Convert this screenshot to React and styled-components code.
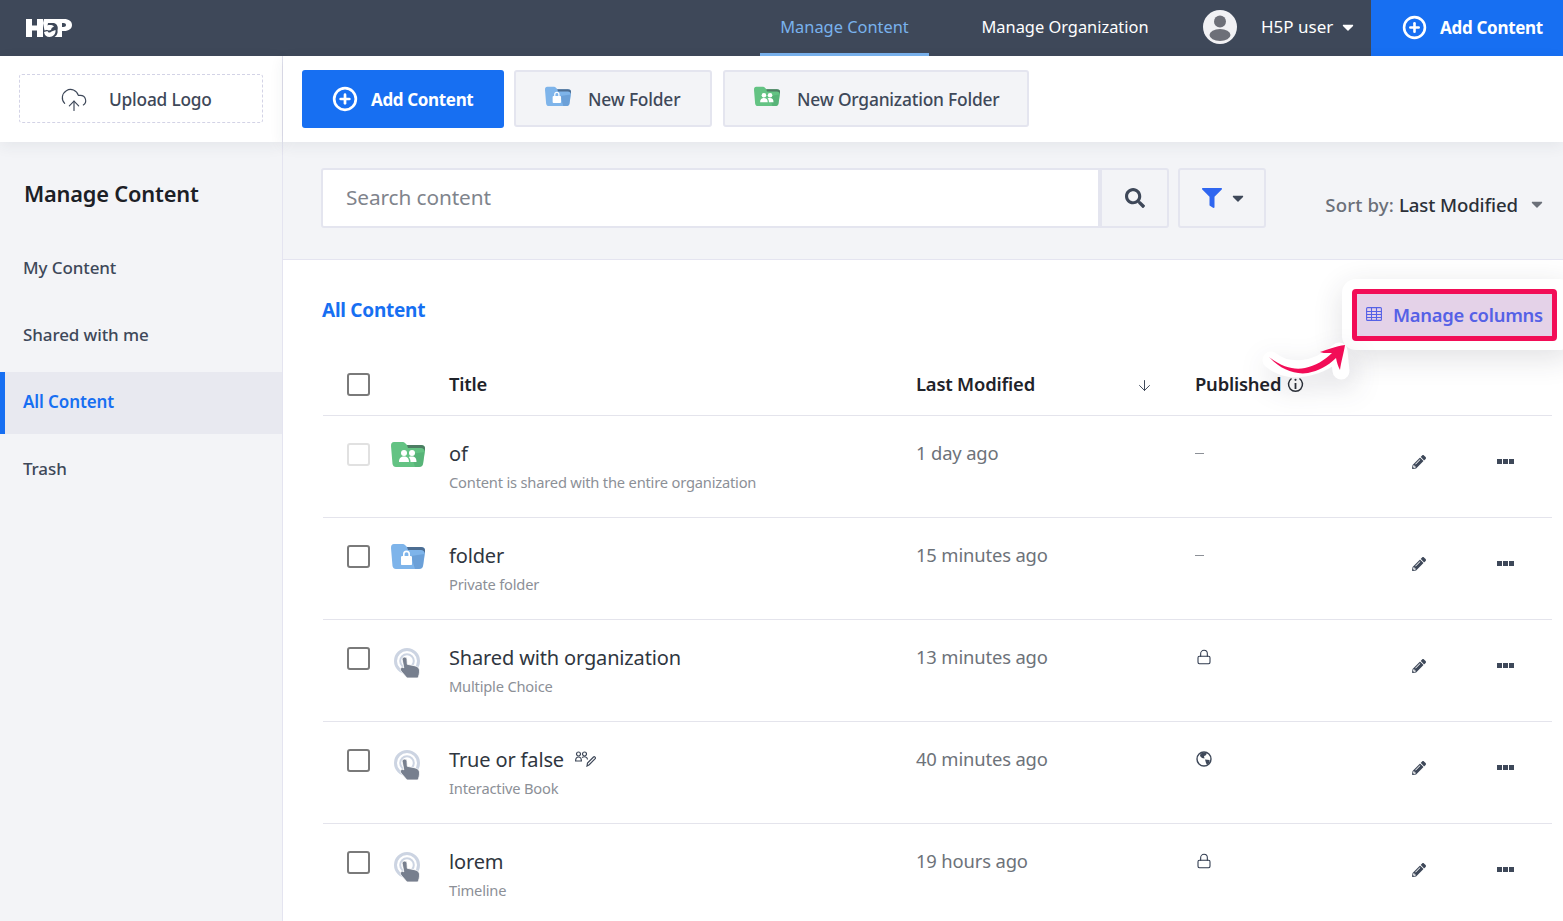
import React from 'react';
import styled, { createGlobalStyle } from 'styled-components';
import { CloudUpload, CirclePlus, Lock, ArrowDown } from 'lucide-react';
import { FaSearch, FaFilter, FaPencilAlt, FaCaretDown } from 'react-icons/fa';

const Global = createGlobalStyle`
  * { box-sizing: border-box; }
  html, body { margin: 0; height: 100%; }
  body {
    font-family: "Noto Sans", "Open Sans", sans-serif;
    color: #3e4859;
    overflow: hidden;
    background: #fff;
  }
`;

const Page = styled.div`
  position: relative;
  width: 1563px;
  height: 921px;
  overflow: hidden;
  display: flex;
  flex-direction: column;
`;

const NavBar = styled.header`
  height: 56px;
  flex: none;
  background: #3e4859;
  display: flex;
  align-items: center;
  padding-left: 26px;
  color: #fff;
`;
const Logo = styled.div`
  flex: 1;
  display: flex;
  align-items: center;
`;
const NavLink = styled.div`
  height: 56px;
  display: flex;
  align-items: center;
  justify-content: center;
  width: ${p => p.$width}px;
  margin-right: ${p => p.$gap || 0}px;
  font-size: 16.4px;
  color: ${p => (p.$active ? '#79b2ed' : '#fff')};
  border-bottom: 3px solid ${p => (p.$active ? '#79b2ed' : 'transparent')};
`;
const UserMenu = styled.div`
  display: flex;
  align-items: center;
  width: 168px;
  font-size: 17px;
  margin-bottom: 2px;
`;
const UserName = styled.span`
  margin: 0 6px 2px 24px;
`;
const NavAdd = styled.div`
  width: 192px;
  height: 56px;
  background: #176ff2;
  display: flex;
  align-items: center;
  gap: 13px;
  padding: 0 0 2px 31px;
  font-size: 17px;
  font-weight: 700;
  letter-spacing: -0.3px;
`;

const Body = styled.div`
  flex: 1;
  display: flex;
  min-height: 0;
`;

const SideBar = styled.aside`
  width: 283px;
  flex: none;
  background: #f3f4f7;
  border-right: 1px solid #e4e4f0;
  display: flex;
  flex-direction: column;
`;
const LogoBox = styled.div`
  position: relative;
  height: 86px;
  flex: none;
  background: #fff;
  padding: 18px 19px 19px;
  box-shadow: 0 4px 14px rgba(40, 50, 70, 0.07);
`;
const UploadLogo = styled.div`
  height: 49px;
  width: 244px;
  border: 1px dashed #d3d3e6;
  border-radius: 3px;
  display: flex;
  align-items: center;
  gap: 21px;
  padding: 2px 0 0 40px;
  font-size: 17.3px;
  font-weight: 500;
  letter-spacing: -0.2px;
  color: #3e4859;
`;
const SideTitle = styled.h2`
  margin: 37px 0 29px 24px;
  font-size: 21.8px;
  line-height: 30px;
  font-weight: 600;
  letter-spacing: -0.2px;
  color: #1c2026;
`;
const SideItem = styled.div`
  height: 62px;
  margin-bottom: 5px;
  display: flex;
  align-items: center;
  padding: 0 0 4px ${p => (p.$active ? 18 : 23)}px;
  font-size: 17px;
  font-weight: ${p => (p.$active ? 600 : 500)};
  letter-spacing: -0.1px;
  color: ${p => (p.$active ? '#176ff2' : '#3e4859')};
  background: ${p => (p.$active ? '#e8e9f0' : 'transparent')};
  border-left: ${p => (p.$active ? '5px solid #176ff2' : 'none')};
`;

const Main = styled.main`
  flex: 1;
  min-width: 0;
  display: flex;
  flex-direction: column;
`;
const ToolBar = styled.div`
  position: relative;
  height: 86px;
  flex: none;
  background: #fff;
  display: flex;
  gap: 10px;
  padding: 14px 0 0 19px;
  box-shadow: 0 4px 14px rgba(40, 50, 70, 0.07);
`;
const PrimaryButton = styled.div`
  width: 202px;
  height: 58px;
  background: #176ff2;
  color: #fff;
  border-radius: 3px;
  display: flex;
  align-items: center;
  gap: 13px;
  padding-left: 30px;
  font-size: 17px;
  font-weight: 700;
  letter-spacing: -0.35px;
`;
const FolderButton = styled.div`
  width: ${p => p.$width}px;
  height: 57px;
  margin-left: ${p => p.$shift || 0}px;
  background: #f3f4f7;
  border: 2px solid #e4e5ef;
  border-radius: 3px;
  display: flex;
  align-items: center;
  gap: 17px;
  padding-left: 29px;
  font-size: 17.4px;
  font-weight: 500;
  letter-spacing: -0.2px;
  color: #3e4859;
`;
const FolderSlot = styled.span`
  display: flex;
  margin-bottom: 5px;
`;
const SearchBand = styled.div`
  height: 118px;
  flex: none;
  background: #f3f4f7;
  border-bottom: 1px solid #e4e4f0;
  display: flex;
  padding: 26px 17px 0 38px;
`;
const SearchInput = styled.div`
  width: 779px;
  height: 60px;
  background: #fff;
  border: 2px solid #e4e5ef;
  border-radius: 3px 0 0 3px;
  display: flex;
  align-items: center;
  padding: 0 0 2px 23px;
  font-size: 20.8px;
  letter-spacing: -0.1px;
  color: #7f848c;
`;
const IconButton = styled.div`
  height: 60px;
  width: ${p => p.$width}px;
  margin-left: ${p => p.$gap || 0}px;
  padding-left: ${p => (p.$gap ? 4 : 0)}px;
  border: 2px solid #e4e5ef;
  border-radius: ${p => (p.$gap ? '3px' : '0 3px 3px 0')};
  display: flex;
  align-items: center;
  justify-content: center;
  gap: 7px;
  color: #3e4859;
`;
const SortBy = styled.div`
  margin-left: auto;
  height: 72px;
  display: flex;
  align-items: center;
  font-size: 18.6px;
  font-weight: 500;
  letter-spacing: -0.1px;
  color: #6b7079;
`;
const SortLabel = styled.span`
  letter-spacing: 0.15px;
`;
const SortValue = styled.span`
  margin-left: 5px;
  color: #2b3038;
`;
const SortCaret = styled.span`
  display: flex;
  margin-left: 10px;
  color: #6b7079;
`;

const Content = styled.section`
  flex: 1;
  min-height: 0;
  padding: 0 11px 0 40px;
`;
const SectionTitle = styled.h3`
  margin: 0 0 0 -1px;
  height: 94px;
  padding-top: 35px;
  font-size: 19px;
  line-height: 30px;
  font-weight: 700;
  letter-spacing: -0.26px;
  color: #176ff2;
`;
const Row = styled.div`
  display: grid;
  grid-template-columns: 68px 58px 467px 279px 217px 85px 1fr;
  height: ${p => p.$height}px;
  border-bottom: 1px solid #e4e4ec;
`;
const Cell = styled.div`
  display: flex;
  flex-direction: column;
  align-items: flex-start;
  padding-top: ${p => p.$top}px;
`;
const Check = styled.span`
  width: 23px;
  height: 23px;
  margin-left: 24px;
  display: block;
  background: #fff;
  border: 2px solid ${p => (p.$disabled ? '#e1e1e1' : '#7a7a7a')};
  border-radius: 3px;
`;
const HeadText = styled.span`
  display: flex;
  align-items: center;
  font-size: 18.4px;
  font-weight: 600;
  letter-spacing: -0.2px;
  color: #1f232a;
`;
const InfoSlot = styled.span`
  display: flex;
  margin: 2px 0 0 6px;
`;
const SortArrow = styled.span`
  display: flex;
  margin: 4px 0 0 101px;
  color: #3e4859;
`;
const Title = styled.div`
  display: flex;
  align-items: center;
  gap: 11px;
  height: 24px;
  font-size: 20px;
  letter-spacing: -0.15px;
  color: #2f3640;
`;
const Sub = styled.div`
  margin-top: 7px;
  height: 20px;
  font-size: 14.7px;
  letter-spacing: -0.2px;
  color: #8c9097;
`;
const Muted = styled.div`
  font-size: 18.4px;
  line-height: 24px;
  letter-spacing: -0.15px;
  color: #6d7279;
`;
const Dash = styled.div`
  width: 9px;
  height: 1px;
  margin-top: 12px;
  background: #8c9097;
`;
const StatusSlot = styled.span`
  display: flex;
  margin-left: 1px;
`;
const Dots = styled.span`
  display: flex;
  gap: 1.5px;
`;
const Dot = styled.i`
  width: 4.5px;
  height: 4.5px;
  background: #3e4859;
`;
const TouchSlot = styled.span`
  display: flex;
  margin: 3px 0 0 3px;
`;

const Overlay = styled.div`
  position: absolute;
  top: 279px;
  right: -10px;
  width: 231px;
  height: 71px;
  padding: 10px 0 0 10px;
  background: #fff;
  border-radius: 14px;
  box-shadow: 0 8px 30px rgba(40, 40, 60, 0.14);
`;
const Highlight = styled.div`
  width: 205px;
  height: 52px;
  background: #e4d2e8;
  border: 5px solid #f20d57;
  border-radius: 4px;
  display: flex;
  align-items: center;
  gap: 11px;
  padding: 0 0 2px 9px;
  font-size: 18.4px;
  font-weight: 600;
  letter-spacing: -0.25px;
  color: #5561e6;
`;
const ArrowWrap = styled.svg`
  position: absolute;
  left: 1255px;
  top: 332px;
  overflow: visible;
`;
const ArrowHalo = styled.path`
  filter: drop-shadow(4px 10px 14px rgba(40, 40, 60, 0.16));
`;

const FolderIcon = ({ color, dark, shade, size = 34, kind }) => (
  <svg width={size} height={size * 0.8} viewBox="0 0 34 27">
    <path d="M3 1h9c1.500 0 2 1 3 2l1 1h14c2 0 4 1 4 3v3l-2 13c-.3 2-2 3-4 3H5c-2 0-3-1-3.500-3L0 5c0-3 1-4 3-4z" fill={color} />
    <path d="M16 4h14c2 0 4 1 4 3v4c-.5-3-2-4-4-4H17z" fill={dark} />
    <path d="M24 26h4c2 0 3.700-1 4-3l1.500-12L20 13z" fill={shade} opacity=".55" />
    {kind === 'lock' ? (
      <g fill="#fff">
        <rect x="10" y="13" width="11" height="9" rx="1.200" />
        <path d="M12 13v-2a3.500 3.500 0 0 1 7 0v2h-1.600v-2a1.900 1.900 0 0 0-3.800 0v2z" />
      </g>
    ) : (
      <g fill="#fff">
        <circle cx="13" cy="12" r="3" />
        <circle cx="21" cy="12" r="3" />
        <path d="M8 21c0-4 2-5.500 5-5.500s5 1.500 5 5.500zM19.500 21c0-2-.5-3.800-1.800-5 1-.5 2.300-.5 3.300-.5 3 0 4.500 1.500 4.500 5.500z" />
      </g>
    )}
  </svg>
);

const TouchIcon = () => (
  <svg width="28" height="30" viewBox="0 0 28 30">
    <circle cx="13" cy="13" r="11.500" fill="none" stroke="#ccd4e2" strokeWidth="3" />
    <circle cx="13" cy="13" r="6.800" fill="none" stroke="#ccd4e2" strokeWidth="2" />
    <path d="M8.200 11.500c0-3.200 4.800-3.200 4.800 0l.3 4.800 7 1.400c4 1 5.200 2.600 5.200 5.300 0 2.600-.6 5-1.600 7H13l-6-7c-1.800-2.400 1-4.800 3-3.100l-.2-.1z" fill="#777f8e" stroke="#fff" strokeWidth=".8" />
  </svg>
);

const LogoMark = () => (
  <svg width="46" height="20" viewBox="0 0 46 20" fill="#fff">
    <path d="M0 1h6v6.500h5V1h6v18h-6v-6.500H6V19H0z" />
    <path d="M18 1h12v4h-8l-.5 2.500c2-.7 5-.5 6.500 1L24 11l-5.500 1.500L17 5z" />
    <circle cx="23" cy="10" r="2.500" />
    <path d="M18 14l3.500-1c.5 2 3 2 4 .5l4-1.500c.5 4-2.500 7-6 7-3 0-5-1.500-5.500-5z" />
    <path d="M28 1h10c5 0 8 2.500 8 6s-3 6-8 6h-2v6h-7.500c2.500-1.500 3.500-4 3-7 1-3-.5-6-3.500-7zM36 5v4h1.500c1.500 0 2.500-.7 2.500-2s-1-2-2.500-2z" />
  </svg>
);

const Avatar = () => (
  <svg width="34" height="34" viewBox="0 0 34 34">
    <circle cx="17" cy="17" r="17" fill="#f1f1f4" />
    <circle cx="17" cy="11.500" r="6" fill="#6d6f78" />
    <ellipse cx="17" cy="25" rx="10.500" ry="6" fill="#6d6f78" />
  </svg>
);

const InfoIcon = () => (
  <svg width="17" height="17" viewBox="0 0 17 17" fill="none" stroke="#2b3038" strokeWidth="1.500">
    <path d="M4.500 2.500a7 7 0 1 0 8 0" />
    <path d="M8.500 7v6" strokeWidth="1.800" />
    <circle cx="8.500" cy="3.800" r="1.100" fill="#2b3038" stroke="none" />
  </svg>
);

const ShareIcon = () => (
  <svg width="21" height="16" viewBox="0 0 21 16" fill="none" stroke="#3e4859" strokeWidth="1.200">
    <circle cx="3.500" cy="3" r="2" />
    <circle cx="9.500" cy="3" r="2" />
    <path d="M.6 10c0-3 1.200-4 2.900-4s2.900 1 2.900 4zM7 6.500c2.500-1.500 5.500-.5 5.500 2" />
    <path d="M12 15l.5-3 6-6c1-.8 2.500.7 1.700 1.700l-6 6z" />
  </svg>
);

const GlobeIcon = () => (
  <svg width="16" height="16" viewBox="0 0 16 16">
    <circle cx="8" cy="8" r="7" fill="#fff" stroke="#3e4859" strokeWidth="1.400" />
    <path d="M4.500 2.500L8 1.500l3 1-1.500 2-1.500.5.500 2.500-2.500-.5L4 5zM9 8.500l4.500.5c.5 1.500-.5 4-2.500 5l-1-2z" fill="#3e4859" />
  </svg>
);

const TableIcon = () => (
  <svg width="16" height="14" viewBox="0 0 16 14" fill="none" stroke="#5561e6" strokeWidth="1.100">
    <rect x=".6" y=".6" width="14.800" height="12.800" rx="1" />
    <path d="M.6 4.500h14.800M.6 7.500h14.800M.6 10.500h14.800M5.500 1v12M10.500 1v12" />
  </svg>
);

const ArrowDraw = () => (
  <ArrowWrap width="96" height="50" viewBox="0 0 96 50">
    <ArrowHalo d="M16 28c14 12 42 14 68-9l2 20" fill="none" stroke="#fff" strokeWidth="17" strokeLinecap="round" strokeLinejoin="round" />
    <path d="M14 25c14 11 26 13 36 11 10-2 20-8 27-15-3 0-8 .500-12-1 6-2 16-6 25-7-1 7-4 17-5 25-2-4-3-7-4-12-8 8-18 13-28 15-14 2-28-4-39-16z" fill="#f20d57" />
  </ArrowWrap>
);

const rows = [
  { title: 'of', sub: 'Content is shared with the entire organization', time: '1 day ago', icon: 'org', status: 'none', disabled: true },
  { title: 'folder', sub: 'Private folder', time: '15 minutes ago', icon: 'lock', status: 'none' },
  { title: 'Shared with organization', sub: 'Multiple Choice', time: '13 minutes ago', icon: 'touch', status: 'lock' },
  { title: 'True or false', sub: 'Interactive Book', time: '40 minutes ago', icon: 'touch', status: 'globe', shared: true },
  { title: 'lorem', sub: 'Timeline', time: '19 hours ago', icon: 'touch', status: 'lock' },
];

const RowIcon = ({ icon }) => {
  if (icon === 'org') return <FolderIcon kind="org" color="#63c383" dark="#4d7d63" shade="#4fa870" />;
  if (icon === 'lock') return <FolderIcon kind="lock" color="#7eb4ea" dark="#4c6d92" shade="#5b8fc8" />;
  return <TouchSlot><TouchIcon /></TouchSlot>;
};

const Status = ({ status }) => {
  if (status === 'lock') return <StatusSlot><Lock size={16} strokeWidth={1.6} color="#2f3a4e" /></StatusSlot>;
  if (status === 'globe') return <StatusSlot><GlobeIcon /></StatusSlot>;
  return <Dash />;
};

const App = () => (
  <Page>
    <Global />
    <NavBar>
      <Logo><LogoMark /></Logo>
      <NavLink $active $width={169} $gap={26}>Manage Content</NavLink>
      <NavLink $width={220} $gap={28}>Manage Organization</NavLink>
      <UserMenu>
        <Avatar />
        <UserName>H5P user</UserName>
        <FaCaretDown size={18} />
      </UserMenu>
      <NavAdd><CirclePlus size={25} strokeWidth={2.5} />Add Content</NavAdd>
    </NavBar>
    <Body>
      <SideBar>
        <LogoBox>
          <UploadLogo>
            <CloudUpload size={28} strokeWidth={1} />
            Upload Logo
          </UploadLogo>
        </LogoBox>
        <SideTitle>Manage Content</SideTitle>
        <SideItem>My Content</SideItem>
        <SideItem>Shared with me</SideItem>
        <SideItem $active>All Content</SideItem>
        <SideItem>Trash</SideItem>
      </SideBar>
      <Main>
        <ToolBar>
          <PrimaryButton><CirclePlus size={26} strokeWidth={2.5} />Add Content</PrimaryButton>
          <FolderButton $width={198}>
            <FolderSlot><FolderIcon kind="lock" size={26} color="#7eb4ea" dark="#4c6d92" shade="#5b8fc8" /></FolderSlot>
            New Folder
          </FolderButton>
          <FolderButton $width={306} $shift={1}>
            <FolderSlot><FolderIcon kind="org" size={26} color="#63c383" dark="#4d7d63" shade="#4fa870" /></FolderSlot>
            New Organization Folder
          </FolderButton>
        </ToolBar>
        <SearchBand>
          <SearchInput>Search content</SearchInput>
          <IconButton $width={69}><FaSearch size={20} /></IconButton>
          <IconButton $width={88} $gap={9}>
            <FaFilter size={20} color="#2f66f0" />
            <FaCaretDown size={18} />
          </IconButton>
          <SortBy>
            <SortLabel>Sort by:</SortLabel>
            <SortValue>Last Modified</SortValue>
            <SortCaret><FaCaretDown size={18} /></SortCaret>
          </SortBy>
        </SearchBand>
        <Content>
          <SectionTitle>All Content</SectionTitle>
          <Row $height={62}>
            <Cell $top={19}><Check /></Cell>
            <Cell />
            <Cell $top={17}><HeadText>Title</HeadText></Cell>
            <Cell $top={17}>
              <HeadText>
                Last Modified
                <SortArrow><ArrowDown size={17} strokeWidth={1.4} /></SortArrow>
              </HeadText>
            </Cell>
            <Cell $top={17}><HeadText>Published<InfoSlot><InfoIcon /></InfoSlot></HeadText></Cell>
            <Cell />
            <Cell />
          </Row>
          {rows.map(row => (
            <Row key={row.title} $height={102}>
              <Cell $top={27}><Check $disabled={row.disabled} /></Cell>
              <Cell $top={25}><RowIcon icon={row.icon} /></Cell>
              <Cell $top={25}>
                <Title>
                  {row.title}
                  {row.shared && <ShareIcon />}
                </Title>
                <Sub>{row.sub}</Sub>
              </Cell>
              <Cell $top={25}><Muted>{row.time}</Muted></Cell>
              <Cell $top={row.status === 'none' ? 25 : 29}><Status status={row.status} /></Cell>
              <Cell $top={39}><FaPencilAlt size={14} color="#3e4859" /></Cell>
              <Cell $top={43}>
                <Dots><Dot /><Dot /><Dot /></Dots>
              </Cell>
            </Row>
          ))}
        </Content>
      </Main>
    </Body>
    <Overlay>
      <Highlight>
        <TableIcon />
        Manage columns
      </Highlight>
    </Overlay>
    <ArrowDraw />
  </Page>
);

export default App;
